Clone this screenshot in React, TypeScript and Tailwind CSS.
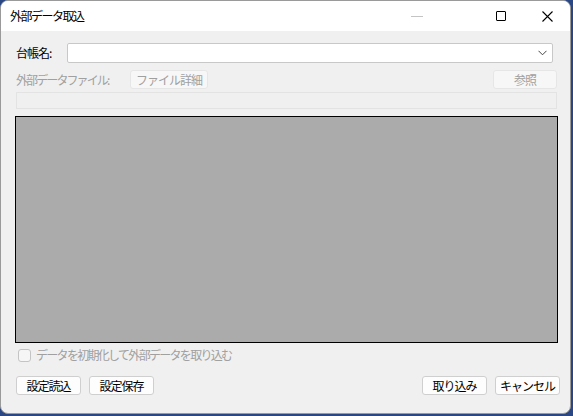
import React from "react";

const font = { fontFamily: '"Noto Sans CJK JP", "Noto Sans", sans-serif' };

function Btn({ label, disabled, className = "" }: { label: string; disabled?: boolean; className?: string }) {
  return (
    <div
      className={`flex h-[19px] items-center justify-center rounded-[3px] border text-[12px] leading-none tracking-[-1px] ${
        disabled ? "border-[#e6e6e6] bg-[#f7f7f7] text-[#a0a0a0]" : "border-[#cfcfcf] bg-[#fdfdfd] text-black"
      } ${className}`}
    >
      {label}
    </div>
  );
}

export default function App() {
  return (
    <div className="h-[416px] w-[573px] overflow-hidden bg-[#2a4683]" style={font}>
      <div className="flex h-[414px] w-[571px] flex-col overflow-hidden rounded-[8px] border border-[#9a9a9a] bg-[#f0f0f0]">
        {/* title bar */}
        <div className="flex h-[30px] shrink-0 items-center bg-white">
          <span className="ml-[9px] text-[12px] tracking-[-1.5px] text-black">外部データ取込</span>
          <div className="ml-auto flex h-full items-center">
            <div className="mr-[38px] flex h-full w-[46px] items-center justify-center">
              <div className="h-px w-[12px] bg-[#c4c4c4]" />
            </div>
            <div className="flex h-full w-[46px] items-center justify-center">
              <div className="h-[10px] w-[10px] rounded-[1px] border border-black" />
            </div>
            <div className="flex h-full w-[46px] items-center justify-center">
              <svg width="11" height="11" viewBox="0 0 11 11">
                <path d="M0.5 0.5L10.5 10.5M10.5 0.5L0.5 10.5" stroke="#000" strokeWidth="1.1" />
              </svg>
            </div>
          </div>
        </div>

        {/* body */}
        <div className="flex flex-1 flex-col px-[14px]">
          <div className="mt-[12px] flex h-[20px] items-center">
            <span className="ml-px w-[50px] text-[12px] tracking-[-1px] text-black">台帳名:</span>
            <div className="ml-px flex h-[20px] w-[486px] items-center justify-end rounded-[2px] border border-[#c8c8c8] bg-white pr-[5px]">
              <svg width="9" height="6" viewBox="0 0 9 6">
                <path d="M0.5 0.8L4.5 4.8L8.5 0.8" stroke="#444" strokeWidth="1" fill="none" />
              </svg>
            </div>
          </div>

          <div className="mt-[7px] flex h-[19px] items-center">
            <span className="ml-px w-[114px] text-[12px] tracking-[-1.9px] text-[#a0a0a0]">外部データファイル:</span>
            <Btn label="ファイル詳細" disabled className="w-[78px]" />
            <Btn label="参照" disabled className="ml-auto mr-[-1px] w-[64px]" />
          </div>

          <div className="ml-px mr-[-1px] mt-[3px] h-[17px] border border-[#e3e3e3] bg-[#f0f0f0]" />

          <div className="mr-[-2px] mt-[7px] h-[227px] border border-black bg-[#ababab]" />

          <div className="mt-[5px] flex h-[14px] items-center">
            <div className="ml-[3px] h-[13px] w-[13px] rounded-[3px] border border-[#c4c4c4] bg-[#f6f6f6]" />
            <span className="ml-[5px] text-[12px] tracking-[-1.7px] text-[#a0a0a0]">データを初期化して外部データを取り込む</span>
          </div>

          <div className="mt-[14px] flex items-center">
            <Btn label="設定読込" className="ml-px w-[65px]" />
            <Btn label="設定保存" className="ml-[8px] w-[65px]" />
            <Btn label="取り込み" className="ml-auto w-[65px]" />
            <Btn label="キャンセル" className="ml-[8px] mr-[-4px] w-[65px]" />
          </div>
        </div>
      </div>
    </div>
  );
}
